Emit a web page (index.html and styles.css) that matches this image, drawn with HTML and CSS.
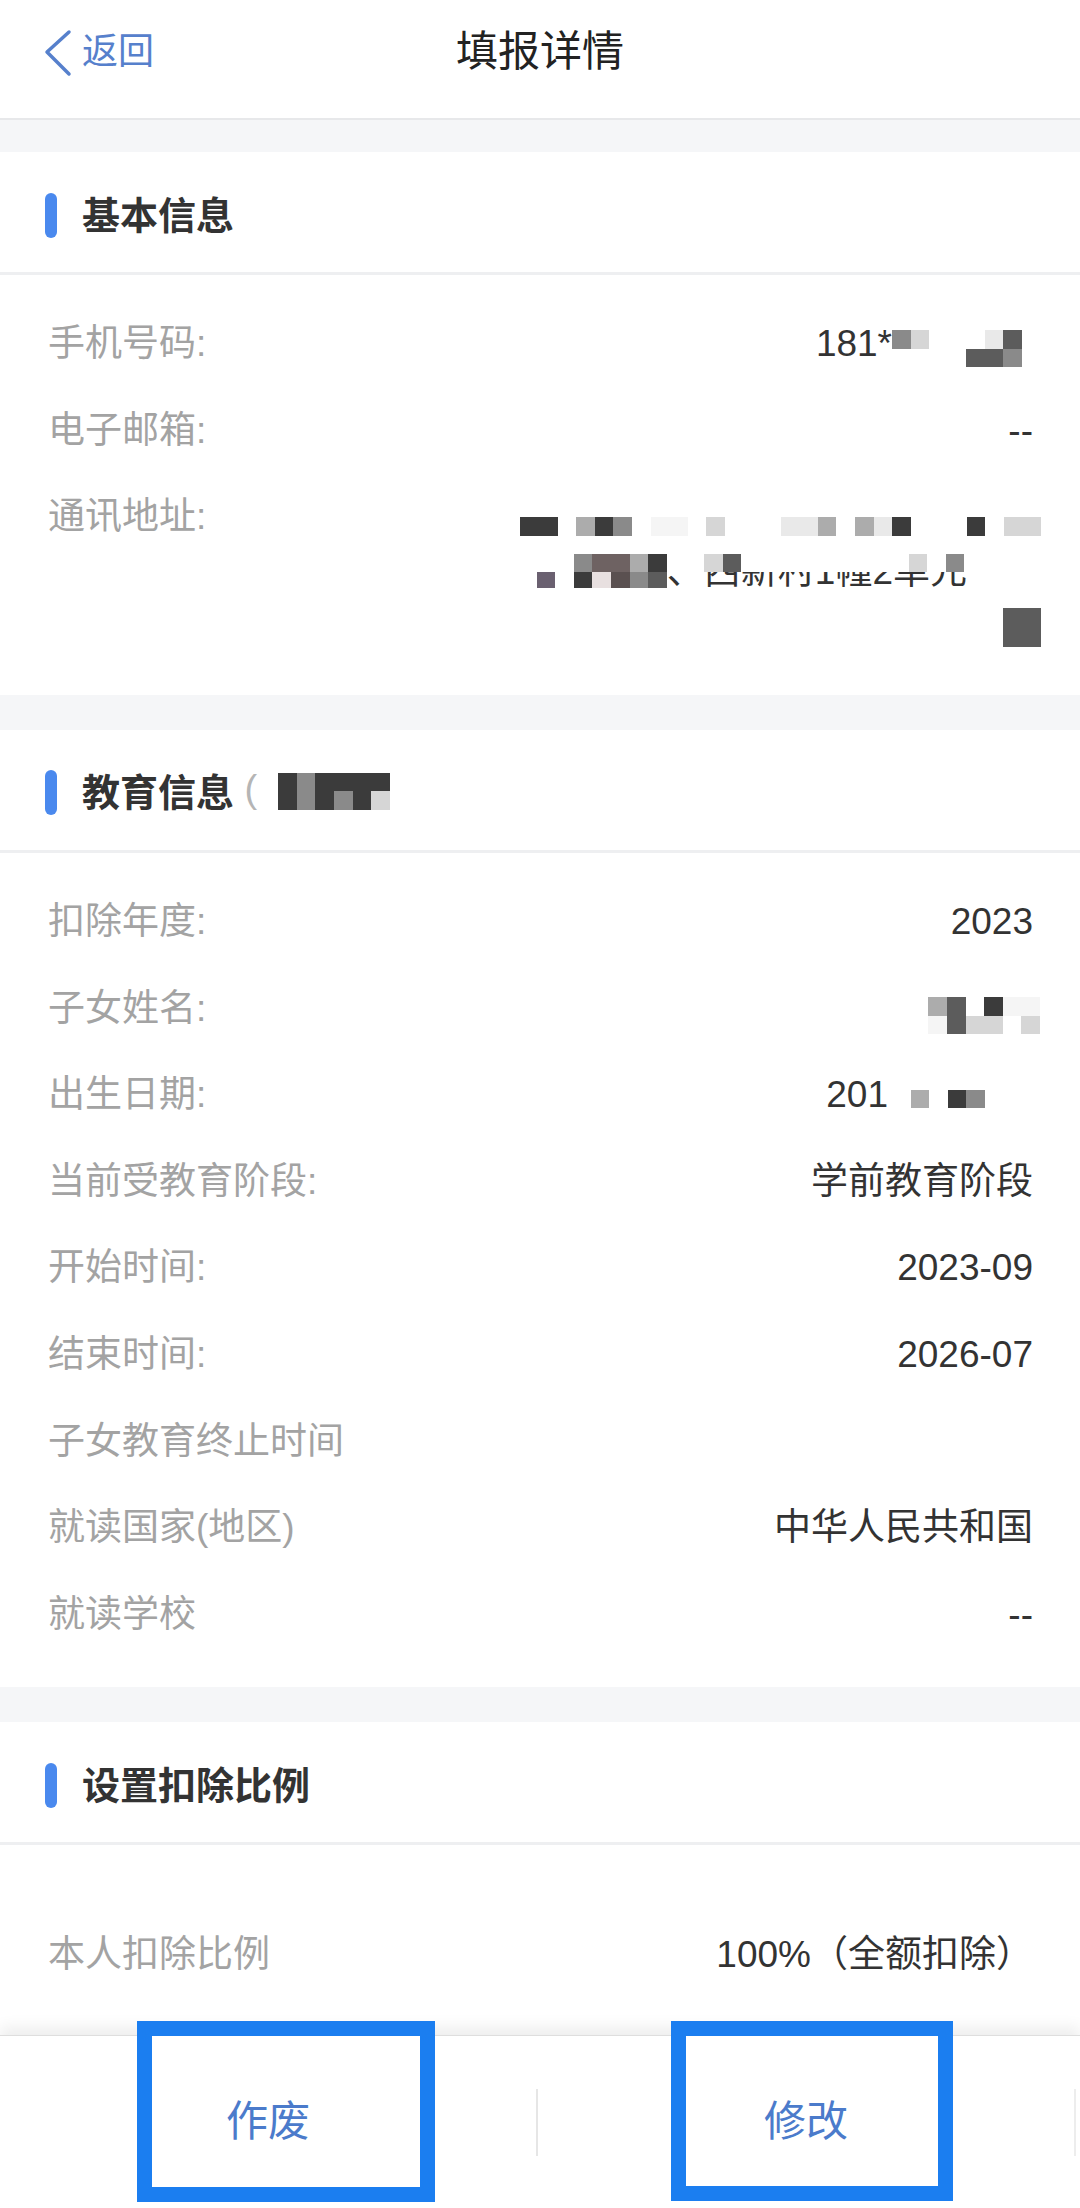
FILE: index.html
```html
<!DOCTYPE html>
<html lang="zh-CN">
<head>
  <meta charset="UTF-8" />
  <meta name="viewport" content="width=device-width, initial-scale=1.0"/>
  <title>填报详情</title>
  <link rel="stylesheet" href="styles.css">
</head>
<body>
  <header class="nav">
    <a class="back">
      <svg width="28" height="48" viewBox="0 0 28 48"><polyline points="25,3 3,23 25,45" fill="none" stroke="#5680cc" stroke-width="3.5" stroke-linecap="round" stroke-linejoin="round"/></svg>
      <span>返回</span>
    </a>
    <h1>填报详情</h1>
    <span></span>
  </header>

  <main class="page">
    <section class="card">
      <h2 class="card-title">基本信息</h2>
      <div class="rows">
        <div class="row">
          <span class="label">手机号码:</span>
          <span class="value">181*<span class="mz phone-a"><b><i class="k3"></i><i class="k5"></i></b></span><span class="mz phone-b"><b><i></i><i class="k6"></i><i class="k2"></i></b><b><i class="k2"></i><i class="k2"></i><i class="k3"></i></b></span></span>
        </div>
        <div class="row">
          <span class="label">电子邮箱:</span>
          <span class="value">--</span>
        </div>
        <div class="row">
          <span class="label">通讯地址:</span>
          <div class="addr">
            <span class="mz line1"><b><i class="k1"></i><i class="k1"></i><i></i><i class="k4"></i><i class="k1"></i><i class="k3"></i><i></i><i class="k7"></i><i class="k7"></i><i></i><i class="k5"></i><i></i><i></i><i></i><i class="k6"></i><i class="k6"></i><i class="k4"></i><i></i><i class="k4"></i><i class="k6"></i><i class="k1"></i><i></i><i></i><i></i><i class="k1"></i><i></i><i class="k5"></i><i class="k5"></i></b></span>
            <div class="line2">
              <span class="mz"><b><i></i><i></i><i class="k3"></i><i class="kr"></i><i class="kr"></i><i class="k4"></i><i class="k1"></i></b><b class="short"><i class="kp"></i><i></i><i class="k1"></i><i class="kw"></i><i class="kr2"></i><i class="k3"></i><i class="k2"></i></b></span>
              <span class="masked">
                <span class="mz"><b><i></i><i></i><i class="k5"></i><i class="k2"></i><i></i><i></i><i></i><i></i><i></i><i></i><i></i><i></i><i></i><i class="k5"></i><i></i><i class="k3"></i></b></span>
                <span class="clip"><span>、西新村1幢2单元</span></span>
              </span>
            </div>
            <span class="mz line3"><b><i class="k2"></i><i class="k2"></i></b><b><i class="k2"></i><i class="k2"></i></b></span>
          </div>
        </div>
      </div>
    </section>

    <section class="card">
      <h2 class="card-title">教育信息<span class="paren"> (</span><span class="mz head-mz"><b><i class="k1"></i><i class="k3"></i><i class="k1"></i><i class="k1"></i><i class="k1"></i><i class="k1"></i></b><b><i class="k1"></i><i class="k3"></i><i class="k1"></i><i class="k3"></i><i class="k1"></i><i class="k5"></i></b></span></h2>
      <div class="rows">
        <div class="row">
          <span class="label">扣除年度:</span>
          <span class="value">2023</span>
        </div>
        <div class="row">
          <span class="label">子女姓名:</span>
          <span class="value"><span class="mz child"><b><i class="k4"></i><i class="k2"></i><i></i><i class="k1"></i><i class="k7"></i><i class="k7"></i></b><b><i class="k7"></i><i class="k2"></i><i class="k5"></i><i class="k5"></i><i></i><i class="k5"></i></b></span></span>
        </div>
        <div class="row">
          <span class="label">出生日期:</span>
          <span class="value">201<span class="mz birth"><b><i></i><i class="k4"></i><i></i><i class="k1"></i><i class="k3"></i></b></span></span>
        </div>
        <div class="row">
          <span class="label">当前受教育阶段:</span>
          <span class="value">学前教育阶段</span>
        </div>
        <div class="row">
          <span class="label">开始时间:</span>
          <span class="value">2023-09</span>
        </div>
        <div class="row">
          <span class="label">结束时间:</span>
          <span class="value">2026-07</span>
        </div>
        <div class="row">
          <span class="label">子女教育终止时间</span>
          <span class="value"></span>
        </div>
        <div class="row">
          <span class="label">就读国家(地区)</span>
          <span class="value">中华人民共和国</span>
        </div>
        <div class="row">
          <span class="label">就读学校</span>
          <span class="value">--</span>
        </div>
      </div>
    </section>

    <section class="card">
      <h2 class="card-title">设置扣除比例</h2>
      <div class="rows">
        <div class="row ratio">
          <span class="label">本人扣除比例</span>
          <span class="value">100%（全额扣除）</span>
        </div>
      </div>
    </section>
  </main>

  <footer class="actions">
    <button class="act">作废</button>
    <span class="divider"></span>
    <button class="act">修改</button>
    <span class="divider edge"></span>
    <!-- highlight marks drawn over the buttons -->
    <span class="mark mark-left"></span>
    <span class="mark mark-right"></span>
  </footer>
</body>
</html>
```

FILE: styles.css
```css
body {
  margin: 0;
  height: 2208px;
  display: flex;
  flex-direction: column;
  overflow: hidden;
  background-color: #f5f6f8;
  font-family: "Liberation Sans", "Noto Sans CJK SC", sans-serif;
  color: #333;
}

.nav {
  flex: none;
  height: 104px;
  padding: 0 44px 14px 44px;
  background: #fff;
  border-bottom: 2px solid #e7e8ea;
  display: grid;
  grid-template-columns: 1fr auto 1fr;
  align-items: center;
}

.back {
  display: flex;
  align-items: center;
  gap: 10px;
  color: #5680cc;
  font-size: 36px;
  line-height: 48px;
}

.back svg {
  margin-top: 2px;
}

.nav h1 {
  margin: 0;
  font-size: 42px;
  font-weight: 400;
  color: #222;
  line-height: 60px;
}

.page {
  flex: 1;
  min-height: 0;
  overflow: hidden;
  padding-top: 32px;
}

.card {
  background: #fff;
}

.card + .card {
  margin-top: 35px;
}

.card-title {
  margin: 0;
  height: 120px;
  padding-left: 45px;
  display: flex;
  align-items: center;
  border-bottom: 3px solid #eeeff1;
  font-size: 38px;
  font-weight: 700;
  color: #333;
}

.card-title::before {
  content: "";
  width: 12px;
  height: 45px;
  margin: 6px 25px 0 0;
  border-radius: 6px;
  background: #4a89ee;
}

.paren {
  font-weight: 400;
  color: #b5b5b5;
  white-space: pre;
}

.rows {
  padding: 26px 47px 29px 48px;
}

.row {
  display: flex;
  justify-content: space-between;
  align-items: flex-start;
  padding: 18.3px 0;
  font-size: 37px;
  line-height: 50px;
}

.label {
  color: #a3a3a3;
  white-space: nowrap;
}

.value {
  display: flex;
  align-items: center;
  justify-content: flex-end;
  color: #333;
  height: 50px;
}

.row.ratio {
  padding: 59px 0;
}

/* mosaic blocks over redacted values */
.mz {
  display: inline-flex;
  flex-direction: column;
}

.mz b {
  display: flex;
}

.mz i {
  width: 18.6px;
  height: 18.5px;
}

.k1 { background: #3b3b3b; }
.k2 { background: #5c5c5c; }
.k3 { background: #8a8a8a; }
.k4 { background: #acacac; }
.k5 { background: #d6d6d6; }
.k6 { background: #e9e9e9; }
.k7 { background: #f5f5f5; }
.kr { background: #6e6262; }
.kr2 { background: #5a5050; }
.kp { background: #6a6070; }
.kw { background: #e8e0e0; }

.phone-a {
  margin-bottom: 10px;
}

.phone-b {
  margin: 9px 11px 0 37px;
}

.addr {
  display: flex;
  flex-direction: column;
  align-items: flex-end;
  margin-right: -8px;
}

.line1 {
  margin-top: 25px;
}

.line2 {
  display: flex;
  margin: 18px 74px 0 0;
}

.line2 .short i {
  height: 16px;
}

.masked {
  display: flex;
  flex-direction: column;
}

.clip {
  display: block;
  height: 16px;
  overflow: hidden;
  white-space: nowrap;
  font-size: 37px;
  line-height: 37px;
  color: #333;
}

.clip span {
  display: block;
  margin-top: -19px;
}

.line3 {
  margin-top: 20px;
}

.line3 i {
  width: 19px;
  height: 19.5px;
}

.head-mz {
  margin: 3px 0 0 21px;
}

.child {
  margin: 14px -7px 0 0;
}

.birth {
  margin: 7px 48px 0 4px;
}

.actions {
  flex: none;
  position: relative;
  height: 172px;
  background: #fff;
  border-top: 1px solid #dedede;
  box-shadow: 0 -8px 14px rgba(0, 0, 0, 0.07);
  display: flex;
  align-items: center;
}

.act {
  flex: 1;
  background: none;
  border: none;
  padding: 0;
  font-family: inherit;
  font-size: 42px;
  line-height: 60px;
  color: #4b7bcb;
}

.divider {
  width: 2px;
  height: 67px;
  background: #e6e6e6;
}

.divider.edge {
  margin-right: 4px;
  background: #ededed;
}

.mark {
  position: absolute;
  top: -15px;
  height: 181px;
  box-sizing: border-box;
  border: 15px solid #1b7ef0;
}

.mark-left {
  left: 137px;
  width: 298px;
}

.mark-right {
  left: 671px;
  width: 282px;
  height: 180px;
}
```
